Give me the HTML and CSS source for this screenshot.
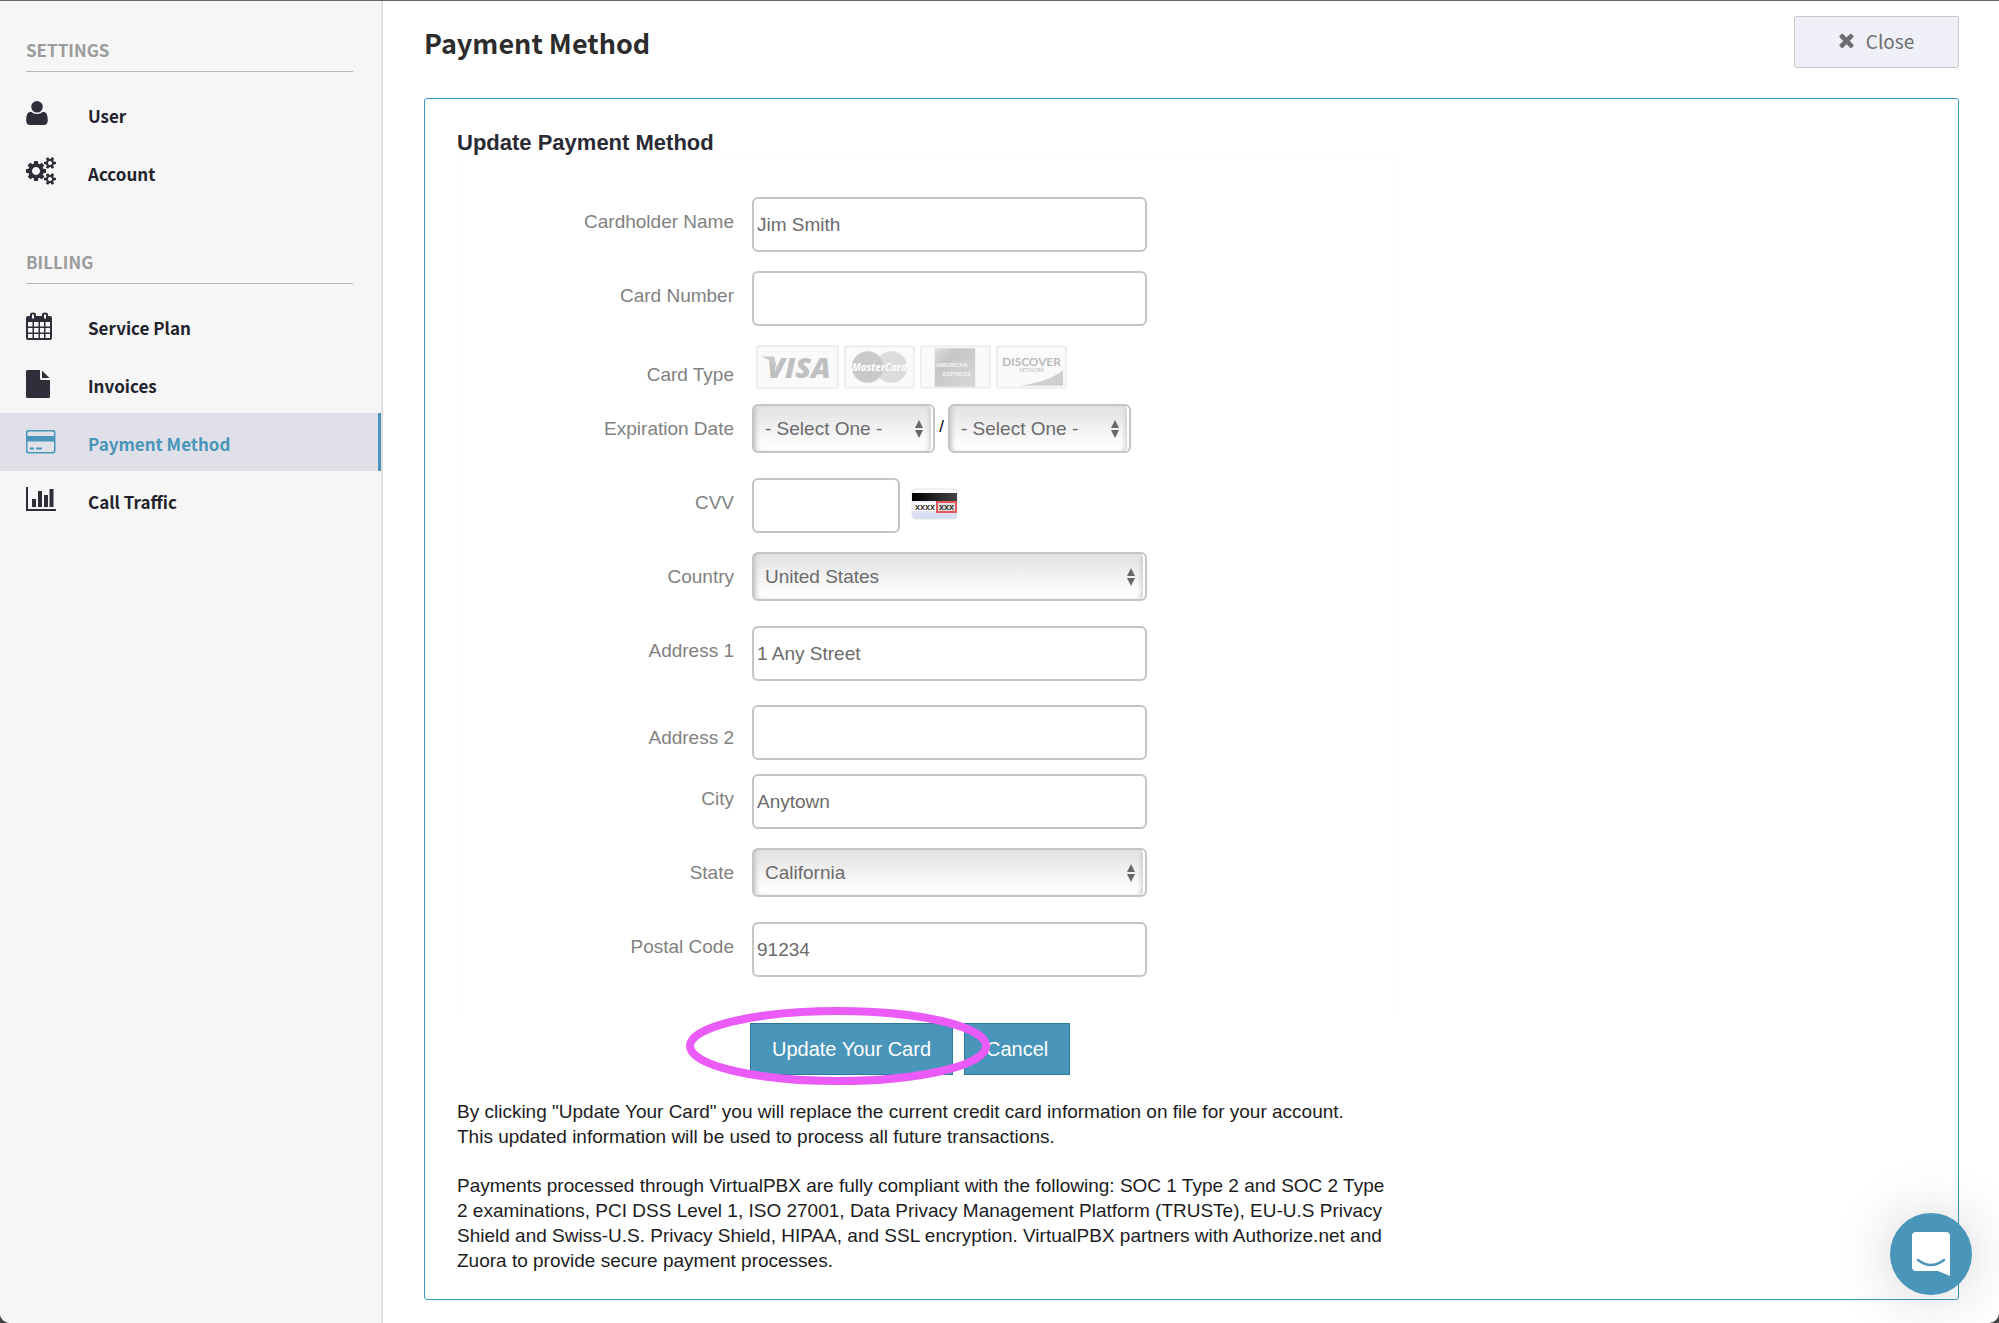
FILE: index.html
```html
<!DOCTYPE html>
<html lang="en">
<head>
<meta charset="utf-8">
<title>Payment Method</title>
<link rel="stylesheet" href="styles.css">
</head>
<body>
<div class="app">
  <nav class="sidebar">
    <h2 class="nav-title">SETTINGS</h2>
    <ul class="nav-list">
      <li><a class="nav-link" href="#user">
        <svg class="nav-icon" viewBox="0 0 30 30"><path d="M11 2a5.800 5.800 0 0 1 0 11.600a5.800 5.800 0 0 1 0-11.600zM5 12.800q2.500 2.200 6 2.200t6-2.200q4.800 0 4.800 8.200q0 5-4 5H4.100q-4 0-4-5q0-8.200 4.900-8.200z"/></svg>
        <span>User</span></a></li>
      <li><a class="nav-link" href="#account">
        <svg class="nav-icon" viewBox="0 0 1920 1920"><defs><path id="cog" d="M1920 1338v140q0 16-149 31-12 27-30 52 51 113 51 138 0 4-4 7-122 71-124 71-8 0-46-47t-52-68q-20 2-30 2t-30-2q-14 21-52 68t-46 47q-2 0-124-71-4-3-4-7 0-25 51-138-18-25-30-52-149-15-149-31v-140q0-16 149-31 13-29 30-52-51-113-51-138 0-4 4-7 4-2 35-20t59-34 30-16q8 0 46 46.500t52 67.500q20-2 30-2t30 2q51-71 92-112l6-2q4 0 124 70 4 3 4 7 0 25-51 138 17 23 30 52 149 15 149 31zM1664 1408q0-52-38-90t-90-38-90 38-38 90q0 53 37.500 90.500t90.500 37.500 90.500-37.500 37.500-90.500z" fill-rule="evenodd"/></defs><path fill-rule="evenodd" d="M896 896q0-106-75-181t-181-75-181 75-75 181 75 181 181 75 181-75 75-181zM1280 805v185q0 10-7 19.500t-16 10.500l-155 24q-11 35-32 76 34 48 90 115 7 11 7 20 0 12-7 19-23 30-82.500 89.500t-78.500 59.500q-11 0-21-7l-115-90q-37 19-77 31-11 108-23 155-7 24-30 24h-186q-11 0-20-7.500t-10-17.500l-23-153q-34-10-75-31l-118 89q-7 7-20 7-11 0-21-8-144-133-144-160 0-9 7-19 10-14 41-53t47-61q-23-44-35-82l-152-24q-10-1-17-9.500t-7-19.500v-185q0-10 7-19.500t16-10.500l155-24q11-35 32-76-34-48-90-115-7-11-7-20 0-12 7-20 22-30 82-89t79-59q11 0 21 7l115 90q34-18 77-32 11-108 23-154 7-24 30-24h186q11 0 20 7.500t10 17.500l23 153q34 10 75 31l118-89q8-7 20-7 11 0 21 8 144 133 144 160 0 8-7 19-12 16-42 54t-45 60q23 48 34 82l152 23q10 2 17 10.500t7 19.500z"/><use href="#cog"/><use href="#cog" y="-1024"/></svg>
        <span>Account</span></a></li>
    </ul>
    <h2 class="nav-title">BILLING</h2>
    <ul class="nav-list">
      <li><a class="nav-link" href="#plan">
        <svg class="nav-icon" viewBox="0 0 30 30"><path fill-rule="evenodd" d="M2 5h2V3.500Q4 1.500 7 1.500T10 3.500V5h6V3.500q0-2 3-2t3 2V5h2q2 0 2 2v20q0 2-2 2H2q-2 0-2-2V7q0-2 2-2zM6 3.500v4h2v-4zM18 3.500v4h2v-4zM2 11v4.500h4.500V11zM8 11v4.500h4.500V11zM14 11v4.500h4V11zM19.500 11v4.500H24V11zM2 17v4.500h4.500V17zM8 17v4.500h4.500V17zM14 17v4.500h4V17zM19.500 17v4.500H24V17zM2 23v4h4.500v-4zM8 23v4h4.500v-4zM14 23v4h4v-4zM19.500 23v4H24v-4z"/></svg>
        <span>Service Plan</span></a></li>
      <li><a class="nav-link" href="#invoices">
        <svg class="nav-icon" viewBox="0 0 30 30"><path d="M1.500 1H14v8.500q0 1.500 1.500 1.500H24v16.500q0 1.500-1.500 1.500h-21Q0 29 0 27.500v-25Q0 1 1.500 1zM16 1.500L23.500 9H16z"/></svg>
        <span>Invoices</span></a></li>
      <li><a class="nav-link nav-link-active" href="#payment" aria-current="page">
        <svg class="nav-icon" viewBox="0 0 30 30"><path fill-rule="evenodd" d="M2.500 3h24.500q2.500 0 2.500 2.500v18.500q0 2.500-2.500 2.500H2.500Q0 26.500 0 24v-18.500Q0 3 2.500 3zM1.500 9H28V6q0-1.500-1.500-1.500H3Q1.500 4.500 1.500 6zM1.500 14.500v9q0 1.500 1.500 1.500h23.500q1.500 0 1.500-1.500v-9zM4 20.500h4v2H4zM10 20.500h6v2h-6z"/></svg>
        <span>Payment Method</span></a></li>
      <li><a class="nav-link" href="#traffic">
        <svg class="nav-icon" viewBox="0 0 30 30"><path d="M0 2h2v22h28v2H0zM6 14h4v8H6zM12 6h4v16h-4zM18 10h4v12h-4zM23.500 4h4v18h-4z"/></svg>
        <span>Call Traffic</span></a></li>
    </ul>
  </nav>

  <main class="main">
    <header class="page-header">
      <h1 class="page-title">Payment Method</h1>
      <button class="close-button" type="button">
        <svg class="close-icon" viewBox="302 302 1188 1252"><path d="M1490 1322q0 40-28 68l-136 136q-28 28-68 28t-68-28l-294-294-294 294q-28 28-68 28t-68-28l-136-136q-28-28-28-68t28-68l294-294-294-294q-28-28-28-68t28-68l136-136q28-28 68-28t68 28l294 294 294-294q28-28 68-28t68 28l136 136q28 28 28 68t-28 68l-294 294 294 294q28 28 28 68z"/></svg>
        <span>Close</span>
      </button>
    </header>

    <section class="panel">
      <form class="payment-form">
        <h2 class="form-title">Update Payment Method</h2>
        <div class="fields">
          <div class="row">
            <label class="label" for="name">Cardholder Name</label>
            <input class="input" id="name" type="text" value="Jim Smith">
          </div>
          <div class="row">
            <label class="label" for="number">Card Number</label>
            <input class="input" id="number" type="text">
          </div>
          <div class="row row-cards">
            <span class="label">Card Type</span>
            <div class="cards">
              <svg class="card-visa" viewBox="0 0 83 44"><rect class="card-face" x="1" y="1" width="81" height="42" rx="2"/><text class="visa-text" x="11" y="33">VISA</text><path class="card-ink" d="M5 11.500h13l4 15q-5-11-17-15z"/></svg>
              <svg class="card-small" viewBox="0 0 72 44"><rect class="card-face" x="1" y="1" width="70" height="42" rx="2"/><circle cx="48" cy="22" r="16" fill="#dcdcdc"/><circle class="card-ink" cx="24" cy="22" r="16"/><text class="mc-text" x="36" y="26">MasterCard</text></svg>
              <svg class="card-small" viewBox="0 0 72 44"><defs><linearGradient id="amex" x1="0" y1="0" x2="1" y2="1"><stop offset="0" stop-color="#dedede"/><stop offset=".300" stop-color="#c6c6c6"/><stop offset="1" stop-color="#d8d8d8"/></linearGradient></defs><rect class="card-face" x="1" y="1" width="70" height="42" rx="2"/><path fill="url(#amex)" d="M15 3h41v39H15z"/><text class="amex-text" x="16" y="22">AMERICAN</text><text class="amex-text" x="23" y="31">EXPRESS</text></svg>
              <svg class="card-small" viewBox="0 0 72 44"><rect class="card-face" x="1" y="1" width="70" height="42" rx="2"/><path fill="#cfcfcf" d="M68 25v16H24q30-4 44-16z"/><text class="discover-text" x="36" y="21">DISCOVER</text><text class="network-text" x="36" y="27">NETWORK</text></svg>
            </div>
          </div>
          <div class="row">
            <label class="label" for="month">Expiration Date</label>
            <div class="date">
              <select class="select select-short" id="month"><option>- Select One -</option></select>
              <span class="slash">/</span>
              <select class="select select-short" aria-label="Expiration year"><option>- Select One -</option></select>
            </div>
          </div>
          <div class="row">
            <label class="label" for="cvv">CVV</label>
            <div class="cvv">
              <input class="input input-short" id="cvv" type="text">
              <svg class="cvv-icon" viewBox="0 0 47 32"><defs><linearGradient id="back" x1="0" y1="0" x2="0" y2="1"><stop offset="0" stop-color="#fff"/><stop offset="1" stop-color="#d3daf0"/></linearGradient><linearGradient id="stripe"><stop offset="0" stop-color="#000"/><stop offset="1" stop-color="#444"/></linearGradient></defs><rect x="1" y="1" width="45" height="30" rx="3" fill="url(#back)" stroke="#e4e4e8"/><path fill="url(#stripe)" d="M1 5h45v8H1z"/><path fill="#fff" d="M3 15h22v8H3z"/><rect x="26" y="14" width="19" height="10" fill="#ddd" stroke="#e65a5e" stroke-width="2"/><text class="cvv-text" x="4" y="22">xxxx</text><text class="cvv-text" x="28" y="22">xxx</text></svg>
            </div>
          </div>
          <div class="row">
            <label class="label" for="country">Country</label>
            <select class="select" id="country"><option>United States</option></select>
          </div>
          <div class="row">
            <label class="label" for="address1">Address 1</label>
            <input class="input" id="address1" type="text" value="1 Any Street">
          </div>
          <div class="row row-address2">
            <label class="label" for="address2">Address 2</label>
            <input class="input" id="address2" type="text">
          </div>
          <div class="row">
            <label class="label" for="city">City</label>
            <input class="input" id="city" type="text" value="Anytown">
          </div>
          <div class="row">
            <label class="label" for="state">State</label>
            <select class="select" id="state"><option>California</option></select>
          </div>
          <div class="row">
            <label class="label" for="postal">Postal Code</label>
            <input class="input" id="postal" type="text" value="91234">
          </div>
        </div>
        <div class="actions">
          <button class="button" type="submit">Update Your Card</button>
          <button class="button" type="button">Cancel</button>
          <svg class="highlight" viewBox="0 0 306 80"><ellipse cx="153" cy="40" rx="148" ry="35"/></svg>
        </div>
        <p class="note">By clicking "Update Your Card" you will replace the current credit card information on file for your account.<br>This updated information will be used to process all future transactions.</p>
        <p class="note">Payments processed through VirtualPBX are fully compliant with the following: SOC 1 Type 2 and SOC 2 Type 2 examinations, PCI DSS Level 1, ISO 27001, Data Privacy Management Platform (TRUSTe), EU-U.S Privacy Shield and Swiss-U.S. Privacy Shield, HIPAA, and SSL encryption. VirtualPBX partners with Authorize.net and Zuora to provide secure payment processes.</p>
      </form>
    </section>
  </main>
</div>
<button class="chat" type="button" aria-label="Open chat">
  <svg class="chat-icon" viewBox="0 0 40 46"><path fill="#fff" d="M5 1h30q4 0 4 4v40l-12-5H5q-4 0-4-4V5q0-4 4-4z"/><path fill="none" stroke="#4a95ba" stroke-width="2.500" stroke-linecap="round" d="M7 29q13 10 26 0"/></svg>
</button>
</body>
</html>
```
FILE: styles.css
```css
* {
  box-sizing: border-box;
}

html {
  background: #444;
}

body {
  margin: 0;
  min-height: 100vh;
  display: flex;
  background: #fff;
  border-top: 1px solid #666;
  border-radius: 0 0 10px 10px;
  overflow: hidden;
  font-family: "Liberation Sans", Arial, sans-serif;
  color: #1c1c1e;
}

.app {
  flex: 1;
  display: flex;
}

/* Sidebar */
.sidebar {
  flex: none;
  width: 383px;
  padding-top: 34px;
  background: #f6f6f6;
  border-right: 2px solid #e0e0e0;
  font-family: "Noto Sans CJK SC", "Noto Sans", sans-serif;
}

.nav-title {
  margin: 0 28px 0 26px;
  height: 37px;
  border-bottom: 1px solid #b8b8b8;
  font-size: 17px;
  line-height: 30px;
  font-weight: 700;
  color: #9c9c9c;
}

.nav-list {
  margin: 0 0 46px;
  padding: 13px 0 0;
  list-style: none;
}

.nav-link {
  display: flex;
  align-items: center;
  gap: 32px;
  height: 58px;
  padding: 3px 0 0 26px;
  font-size: 17px;
  font-weight: 700;
  color: #22222c;
  text-decoration: none;
}

.nav-icon {
  flex: none;
  width: 30px;
  height: 30px;
  margin-bottom: 4px;
  fill: #2e2e38;
}

.nav-link-active {
  background: #dfe0e8;
  border-right: 3px solid #4a95ba;
  color: #4a95ba;
}

.nav-link-active .nav-icon {
  fill: #4a95ba;
}

/* Page header */
.main {
  flex: 1;
  min-width: 0;
  padding: 15px 40px 22px 41px;
}

.page-header {
  display: flex;
  justify-content: space-between;
  align-items: flex-start;
  height: 82px;
  font-family: "Noto Sans CJK SC", "Noto Sans", sans-serif;
}

.page-title {
  margin: 7px 0 0;
  font-size: 27px;
  line-height: 40px;
  font-weight: 700;
  color: #2c2c2c;
}

.close-button {
  display: flex;
  align-items: center;
  justify-content: center;
  gap: 12px;
  width: 165px;
  height: 52px;
  padding: 0 0 3px;
  background: #efeff8;
  border: 1px solid #c8c8c8;
  border-radius: 2px;
  font-family: inherit;
  font-size: 19px;
  color: #6e6e70;
}

.close-icon {
  width: 15px;
  height: 15px;
  fill: #6e6e70;
}

/* Panel and form */
.panel {
  padding: 29px 32px 26px;
  border: 1px solid #3c99c0;
  border-radius: 3px;
}

.payment-form {
  max-width: 938px;
}

.form-title {
  margin: 0;
  font-size: 22px;
  line-height: 29px;
  color: #2a2a34;
}

.fields {
  padding: 39px 0 22px;
  border: 1px solid #fafafa;
  border-bottom: 0;
}

.row {
  display: grid;
  grid-template-columns: 276px 395px;
  column-gap: 18px;
  align-items: start;
  min-height: 74px;
}

.label {
  padding-top: 13px;
  font-size: 19px;
  line-height: 24px;
  text-align: right;
  color: #818181;
}

.row-cards {
  min-height: 59px;
}

.row-cards .label {
  padding-top: 18px;
}

.row-address2 {
  padding-top: 5px;
}

.row-address2 .label {
  padding-top: 21px;
}

.input,
.select {
  width: 100%;
  border: 2px solid #c5c5c5;
  border-radius: 6px;
  font-family: inherit;
  font-size: 19px;
  color: #6b6b6b;
}

.input {
  height: 55px;
  padding: 0 3px;
  background: #fff;
}

.input-short {
  width: 148px;
}

.select {
  height: 49px;
  padding: 0 28px 0 11px;
  appearance: none;
  background: url("data:image/svg+xml,%3Csvg xmlns='http://www.w3.org/2000/svg' width='8' height='18'%3E%3Cpath fill='%23686868' d='M4 0L8 8H0zM0 10H8L4 18z'/%3E%3C/svg%3E") no-repeat right 10px center, linear-gradient(#e6e6e6 15%, #fdfdfd 85%);
  box-shadow: inset 5px 0 4px -3px #c8c8c8, inset -2px 0 0 #fff, inset -6px 0 4px -2px #d0d0d0;
}

.select-short {
  width: 183px;
}

.date {
  display: flex;
}

.slash {
  width: 13px;
  font-size: 17px;
  line-height: 46px;
  text-align: center;
  color: #000;
}

.cvv {
  display: flex;
  align-items: center;
  gap: 11px;
}

.cvv-icon {
  width: 47px;
  height: 32px;
  margin-bottom: 4px;
}

.cvv-text {
  font: bold 9px "Liberation Sans", Arial, sans-serif;
  fill: #333;
}

/* Accepted card logos */
.cards {
  display: flex;
  gap: 5px;
  padding-left: 4px;
}

.card-visa {
  width: 83px;
  height: 44px;
}

.card-small {
  width: 71px;
  height: 44px;
}

.card-face {
  fill: #fafafa;
  stroke: #eee;
  stroke-width: 2;
}

.card-ink {
  fill: #c9c9c9;
}

.visa-text {
  font: italic 800 29px "Open Sans", sans-serif;
  fill: #c0c0c0;
}

.mc-text {
  font: italic bold 10px "Open Sans", sans-serif;
  fill: #fff;
  text-anchor: middle;
}

.amex-text {
  font: bold 6px "Liberation Sans", Arial, sans-serif;
  fill: #f4f4f4;
}

.discover-text {
  font: bold 12px Lato, sans-serif;
  fill: #bbb;
  text-anchor: middle;
}

.network-text {
  font: 5px Lato, sans-serif;
  fill: #bbb;
  text-anchor: middle;
}

/* Actions */
.actions {
  position: relative;
  display: flex;
  gap: 11px;
  padding: 5px 0 24px 293px;
}

.button {
  height: 52px;
  padding: 0 21px;
  background: #4a95ba;
  border: 1px solid #2f7a9c;
  font-family: inherit;
  font-size: 20px;
  color: #fff;
}

.highlight {
  position: absolute;
  left: 228px;
  top: -12px;
  width: 306px;
  height: 80px;
  pointer-events: none;
}

.highlight ellipse {
  fill: none;
  stroke: #ea5bf7;
  stroke-width: 8;
}

.note {
  margin: 0 0 24px;
  font-size: 19px;
  line-height: 25px;
}

.note:last-child {
  margin-bottom: 0;
}

/* Chat launcher */
.chat {
  position: fixed;
  right: 27px;
  bottom: 28px;
  display: flex;
  align-items: center;
  justify-content: center;
  width: 82px;
  height: 82px;
  padding: 0;
  background: #4a95ba;
  border: 0;
  border-radius: 50%;
  box-shadow: 0 2px 60px rgba(0, 0, 0, 0.18);
}

.chat-icon {
  width: 40px;
  height: 46px;
}
```
